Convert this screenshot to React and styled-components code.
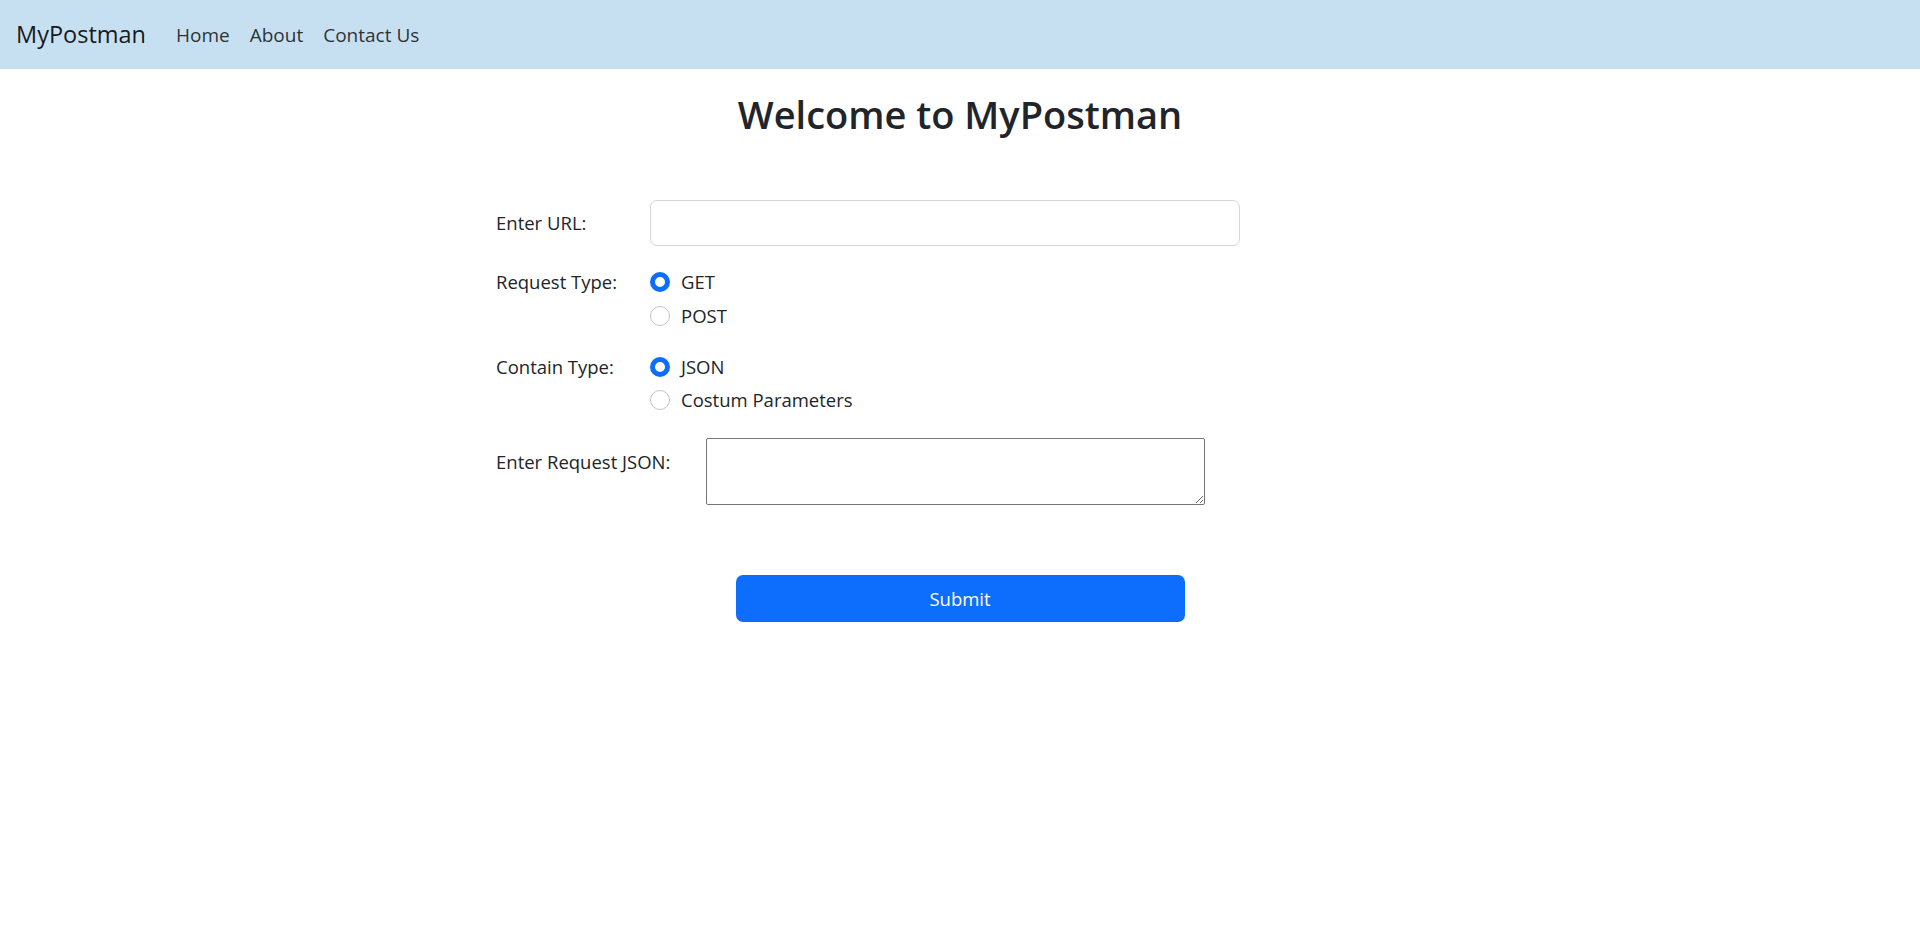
import React, { useState } from "react";
import styled, { createGlobalStyle } from "styled-components";

const GlobalStyle = createGlobalStyle`
  * {
    box-sizing: border-box;
  }
  body {
    margin: 0;
    font-family: "Open Sans", "Noto Sans", sans-serif;
    font-size: 18.5px;
    line-height: 1.5;
    color: #212529;
    background: #fff;
  }
`;

const App = () => {
  const [requestType, setRequestType] = useState("GET");
  const [containType, setContainType] = useState("JSON");

  return (
    <>
      <GlobalStyle />
      <Navbar>
        <Brand href="#">MyPostman</Brand>
        <NavList>
          <NavLink href="#">Home</NavLink>
          <NavLink href="#">About</NavLink>
          <NavLink href="#">Contact Us</NavLink>
        </NavList>
      </Navbar>
      <Main>
        <Title>Welcome to MyPostman</Title>
        <Form onSubmit={(e) => e.preventDefault()}>
          <FieldRow $align="center">
            <Label htmlFor="url">Enter URL:</Label>
            <UrlInput id="url" type="text" />
          </FieldRow>
          <FieldRow>
            <Label>Request Type:</Label>
            <Options>
              {["GET", "POST"].map((opt) => (
                <Option key={opt}>
                  <Radio
                    type="radio"
                    name="requestType"
                    checked={requestType === opt}
                    onChange={() => setRequestType(opt)}
                  />
                  {opt}
                </Option>
              ))}
            </Options>
          </FieldRow>
          <FieldRow>
            <Label>Contain Type:</Label>
            <Options>
              {["JSON", "Costum Parameters"].map((opt) => (
                <Option key={opt}>
                  <Radio
                    type="radio"
                    name="containType"
                    checked={containType === opt}
                    onChange={() => setContainType(opt)}
                  />
                  {opt}
                </Option>
              ))}
            </Options>
          </FieldRow>
          <JsonRow>
            <JsonLabel htmlFor="json">Enter Request JSON:</JsonLabel>
            <JsonArea id="json" />
          </JsonRow>
        </Form>
        <SubmitButton type="submit">Submit</SubmitButton>
      </Main>
    </>
  );
};

export default App;

const Navbar = styled.nav`
  display: flex;
  align-items: center;
  height: 69px;
  padding: 1px 16px 0;
  background: #c6dff1;
`;

const Brand = styled.a`
  font-size: 23.5px;
  line-height: 37.5px;
  color: rgba(0, 0, 0, 0.9);
  text-decoration: none;
  margin-right: 20px;
`;

const NavList = styled.div`
  display: flex;
`;

const NavLink = styled.a`
  padding: 0 10px;
  font-size: 19px;
  color: rgba(0, 0, 0, 0.8);
  text-decoration: none;
`;

const Main = styled.main`
  display: flex;
  flex-direction: column;
  align-items: center;
`;

const Title = styled.h2`
  margin: 21px 0 62px;
  font-size: 38px;
  line-height: 48px;
  font-weight: 600;
`;

const Form = styled.form`
  width: 928px;
  display: flex;
  flex-direction: column;
  gap: 21px;
`;

const FieldRow = styled.div`
  display: grid;
  grid-template-columns: 154px 590px;
  align-items: ${(p) => p.$align || "start"};
`;

const Label = styled.label`
  line-height: 30px;
`;

const UrlInput = styled.input`
  height: 46px;
  width: 590px;
  padding: 7px 15px;
  font: inherit;
  border: 1px solid #d3d6db;
  border-radius: 7px;
  outline: none;
`;

const Options = styled.div`
  display: flex;
  flex-direction: column;
  gap: 3.5px;
`;

const Option = styled.label`
  display: flex;
  align-items: center;
  gap: 11px;
  line-height: 30px;
`;

const Radio = styled.input`
  appearance: none;
  margin: 0;
  width: 20px;
  height: 20px;
  border-radius: 50%;
  border: 1px solid #c4c4c4;
  background: #fff;

  &:checked {
    border: 5px solid #0d6efd;
    background: #fff;
  }
`;

const JsonRow = styled.div`
  display: flex;
  align-items: flex-start;
  margin-top: 2px;
`;

const JsonLabel = styled.label`
  margin-top: 9px;
  width: 210px;
  line-height: 30px;
`;

const JsonArea = styled.textarea`
  width: 499px;
  height: 67px;
  margin: 0;
  border: 1px solid #767676;
  border-radius: 2px;
  font-family: "Liberation Mono", monospace;
`;

const SubmitButton = styled.button`
  margin-top: 70px;
  width: 449px;
  height: 47px;
  border: none;
  border-radius: 7px;
  background: #0d6efd;
  color: #fff;
  font: inherit;
  font-size: 18.5px;
  cursor: pointer;
`;
